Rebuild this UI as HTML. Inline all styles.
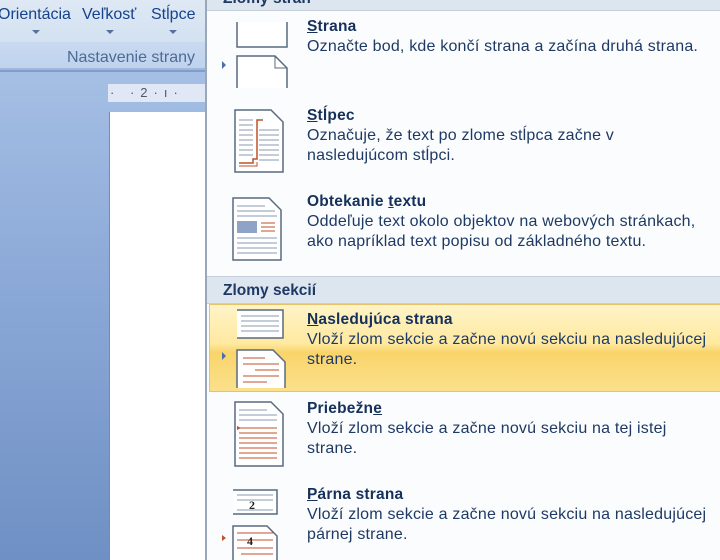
<!DOCTYPE html><html><head><meta charset="utf-8"><style>
*{margin:0;padding:0;box-sizing:border-box}
body{width:720px;height:560px;overflow:hidden;position:relative;font-family:"Liberation Sans",sans-serif;background:#7f9dcb}
.abs{position:absolute}
.rib{left:0;top:0;width:205px;height:42px;background:linear-gradient(#dfe9f5,#d3e1f1)}
.rib span{position:absolute;top:6px;font-size:16px;color:#15428b}
.arr{position:absolute;top:30px;width:0;height:0;border-left:4px solid transparent;border-right:4px solid transparent;border-top:4px solid #5670a0}
.grp{left:0;top:42px;width:205px;height:28px;background:linear-gradient(#c9daf0,#bfd3ee);border-bottom:2px solid #9fb8dc}
.grp span{position:absolute;right:10px;top:7px;font-size:16px;color:#4e6a96}
.doc{left:0;top:72px;width:205px;height:488px;background:linear-gradient(#a5bfe4,#8daad8 40%,#6f90c4)}
.ruler{left:108px;top:84px;width:97px;height:18px;background:#dfe8f4;font-size:13px;color:#556;}
.page{left:109px;top:112px;width:96px;height:448px;background:#fff;border-left:1px solid #7a8aa0}
.menu{left:205px;top:0;width:515px;height:560px;background:#fbfcfd;border-left:2px solid #9aa7b8}
.hdr{position:absolute;left:0;width:515px;background:#dde5ef;border-bottom:1px solid #c5cfdc;color:#1e3a64;font-weight:bold;font-size:15.5px;padding-left:16px}
.it{position:absolute;left:100px;color:#1e3a64;font-size:16px;line-height:19.5px;letter-spacing:.2px;white-space:nowrap}
.it b{display:block;color:#15305a;font-size:15.5px;letter-spacing:.2px;line-height:21px}
.it b u{text-decoration:underline}
.hl{position:absolute;left:2px;top:304px;width:513px;height:88px;background:linear-gradient(#fff4c8,#ffe9a0 45%,#f9d46a 55%,#fbe08c);border:1px solid #e8c268}
svg{position:absolute}
</style></head><body>
<div class="abs rib"><span style="left:-2px">Orientácia</span><span style="left:82px">Veľkosť</span><span style="left:151px">Stĺpce</span>
<div class="arr" style="left:32px"></div><div class="arr" style="left:106px"></div><div class="arr" style="left:169px"></div></div>
<div class="abs grp"><span>Nastavenie strany</span></div>
<div class="abs doc"></div>
<div class="abs ruler"><span style="position:absolute;left:2px;top:1px;letter-spacing:6px">·&nbsp;·2·ı·</span></div>
<div class="abs page"></div>
<div class="abs menu">
<div class="hdr" style="top:-8px;height:19px;line-height:14px">Zlomy strán</div>
<div class="hdr" style="top:276px;height:28px;line-height:28px;border-top:1px solid #c5cfdc">Zlomy sekcií</div>
<div class="hl"></div>
<div class="it" style="top:16px"><b><u>S</u>trana</b>Označte bod, kde končí strana a začína druhá strana.</div>
<div class="it" style="top:105px"><b><u>S</u>tĺpec</b>Označuje, že text po zlome stĺpca začne v<br>nasledujúcom stĺpci.</div>
<div class="it" style="top:191px"><b>Obtekanie <u>t</u>extu</b>Oddeľuje text okolo objektov na webových stránkach,<br>ako napríklad text popisu od základného textu.</div>
<div class="it" style="top:309px"><b><u>N</u>asledujúca strana</b>Vloží zlom sekcie a začne novú sekciu na nasledujúcej<br>strane.</div>
<div class="it" style="top:398px"><b>Priebežn<u>e</u></b>Vloží zlom sekcie a začne novú sekciu na tej istej<br>strane.</div>
<div class="it" style="top:484px"><b><u>P</u>árna strana</b>Vloží zlom sekcie a začne novú sekciu na nasledujúcej<br>párnej strane.</div>
<svg style="left:12px;top:20px" width="72" height="72" viewBox="0 0 72 72"><path d="M18 2v25h50V2" fill="#fff" stroke="#596a80" stroke-width="1.5"/><path d="M3 41l4 4-4 4z" fill="#4a6fb0"/><path d="M18 68V36h38l12 12v20" fill="#fff" stroke="#596a80" stroke-width="1.5"/><path d="M56 36v12h12" fill="none" stroke="#596a80"/></svg>
<svg style="left:20px;top:108px" width="60" height="70"><path d="M8 2h36l12 12v50H8z" fill="#fff" stroke="#596a80" stroke-width="1.5"/><g stroke="#8898b0"><path d="M12 12h14M12 17h14M12 22h14M12 27h14M12 32h14M12 37h14M12 42h14M12 47h14M32 22h20M32 27h20M32 32h20M32 37h20M32 42h20M32 47h20M32 52h20"/></g><path d="M12 55h14v-4h4V12h6" fill="none" stroke="#c0502a" stroke-width="1.5"/><path d="M12 58h18v-4" fill="none" stroke="#c0502a"/></svg>
<svg style="left:20px;top:196px" width="60" height="70"><path d="M6 2h36l12 12v50H6z" fill="#fff" stroke="#596a80" stroke-width="1.5"/><g stroke="#8898b0"><path d="M10 10h28M10 15h38M10 20h40M10 42h40M10 47h40M10 52h40M10 57h40"/></g><rect x="10" y="25" width="20" height="12" fill="#8fa3c6"/><g stroke="#c0502a"><path d="M34 27h14M34 31h14M34 35h14"/></g></svg>
<svg style="left:12px;top:308px" width="72" height="82"><path d="M18 2h46v28H18" fill="#fff" stroke="#596a80" stroke-width="1.5"/><g stroke="#8898b0"><path d="M22 8h38M22 13h38M22 18h38M22 23h38"/></g><path d="M3 44l4 4-4 4z" fill="#4a6fb0"/><path d="M18 80V42h36l12 12v26" fill="#fff" stroke="#596a80" stroke-width="1.5"/><g stroke="#c0502a"><path d="M24 50h22M24 56h36M36 62h24M24 68h36M24 74h24"/></g></svg>
<svg style="left:20px;top:400px" width="60" height="70"><path d="M8 2h36l12 12v52H8z" fill="#fff" stroke="#596a80" stroke-width="1.5"/><g stroke="#8898b0"><path d="M12 10h28M12 15h38M12 20h38"/></g><g stroke="#c0502a"><path d="M12 28h38M12 33h38M12 38h38M12 43h38M12 48h38M12 53h38M12 58h38"/></g><path d="M10 26l4 2-4 2z" fill="#c0502a"/></svg>
<svg style="left:12px;top:488px" width="72" height="72"><path d="M14 2h44v24H14" fill="#fff" stroke="#596a80" stroke-width="1.5"/><g stroke="#8898b0"><path d="M18 7h36M18 12h36M18 22h36"/></g><text x="30" y="21" font-family="Liberation Serif" font-size="12" font-weight="bold" fill="#222">2</text><path d="M14 72V38h34l10 10v24" fill="#fff" stroke="#596a80" stroke-width="1.5"/><g stroke="#c0502a"><path d="M18 45h36M18 52h36M18 60h36M22 66h32"/></g><text x="28" y="57" font-family="Liberation Serif" font-size="12" font-weight="bold" fill="#222">4</text><path d="M3 47l4 3-4 3z" fill="#c0502a"/></svg>
</div>
</body></html>
